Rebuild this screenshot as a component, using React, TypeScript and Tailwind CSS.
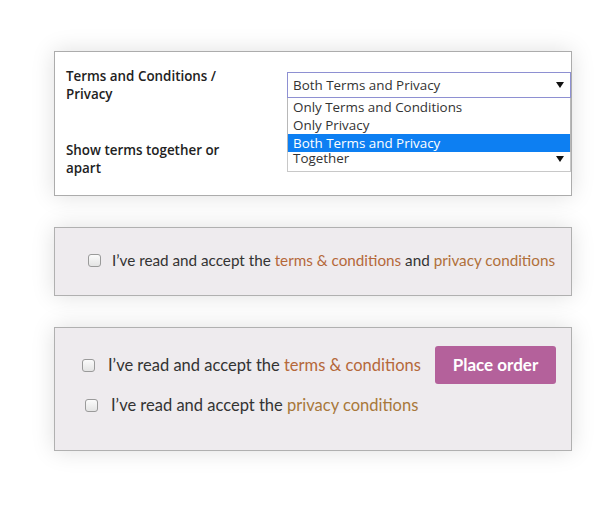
import React from "react";

const Checkbox = () => (
  <span className="inline-block w-[13px] h-[13px] shrink-0 rounded-[3px] border border-[#9a9a9a] bg-gradient-to-b from-[#fbfbfb] to-[#e4e4e4]" />
);

const Arrow = () => (
  <svg width="8" height="6" viewBox="0 0 8 6" className="shrink-0">
    <path d="M0 0 L8 0 L4 6 Z" fill="#111" />
  </svg>
);

export default function App() {
  const lato = { fontFamily: "Lato, 'Open Sans', sans-serif" } as React.CSSProperties;
  return (
    <div className="w-[600px] h-[506px] bg-white overflow-hidden" style={{ fontFamily: "'Open Sans', sans-serif" }}>
      <div className="pt-[51px] pl-[54px] flex flex-col">
        {/* Panel 1 */}
        <div className="relative w-[518px] h-[145px] border border-[#acacac] bg-white shadow-[0_0_22px_rgba(0,0,0,0.13)] pl-[11px] pt-[15px] flex flex-col gap-[38px]">
          <div className="flex items-start">
            <div className="w-[221px] text-[13.4px] leading-[18px] font-semibold text-[#222]">
              Terms and Conditions /<br />Privacy
            </div>
            <div className="relative flex-1 mt-[5px]">
              <div className="h-[26px] border border-[#8e90d2] bg-white flex items-center justify-between pl-[5px] pr-[6px] text-[13.4px] text-[#333]">
                <span>Both Terms and Privacy</span>
                <Arrow />
              </div>
              <div className="absolute left-0 right-0 top-[26px] z-10 bg-white border-x border-[#b8b8b8] text-[13.4px] text-[#333] leading-[18px]">
                <div className="h-[18px] pl-[5px]">Only Terms and Conditions</div>
                <div className="h-[18px] pl-[5px]">Only Privacy</div>
                <div className="h-[18px] pl-[5px] bg-[#0d7ff2] text-white">Both Terms and Privacy</div>
              </div>
            </div>
          </div>
          <div className="flex items-start">
            <div className="w-[221px] text-[13.4px] leading-[18px] font-semibold text-[#222]">
              Show terms together or<br />apart
            </div>
            <div className="relative flex-1 mt-[5px]">
              <div className="h-[26px] border border-[#c8c8c8] bg-white flex items-end justify-between pl-[5px] pr-[6px] pb-[3px] text-[13.4px] text-[#333]">
                <span>Together</span>
                <span className="mb-[6px]"><Arrow /></span>
              </div>
            </div>
          </div>
        </div>

        {/* Panel 2 */}
        <div className="mt-[31px] w-[518px] h-[69px] border border-[#b0b0b0] bg-[#eeebee] shadow-[0_0_22px_rgba(0,0,0,0.13)] pl-[33px] pb-[3px] flex items-center gap-[11px]" style={lato}>
          <Checkbox />
          <span className="text-[15.25px] text-[#333]">
            I’ve read and accept the <span className="text-[#b5683a]">terms &amp; conditions</span> and{" "}
            <span className="text-[#b0703a]">privacy conditions</span>
          </span>
        </div>

        {/* Panel 3 */}
        <div className="mt-[31px] w-[518px] h-[124px] border border-[#b0b0b0] bg-[#eeebee] shadow-[0_0_22px_rgba(0,0,0,0.13)] pl-[27px] pr-[15px] pt-[18px] flex items-start justify-between" style={lato}>
          <div className="flex flex-col gap-[2px]">
            <div className="h-[38px] flex items-center gap-[13px]">
              <Checkbox />
              <span className="text-[16.5px] text-[#333]">
                I’ve read and accept the <span className="text-[#b5683a]">terms &amp; conditions</span>
              </span>
            </div>
            <div className="h-[38px] flex items-center gap-[13px] ml-[3px]">
              <Checkbox />
              <span className="text-[16.5px] text-[#333]">
                I’ve read and accept the <span className="text-[#a8783a]">privacy conditions</span>
              </span>
            </div>
          </div>
          <button className="w-[121px] h-[38px] rounded-[3px] bg-[#b4619b] text-white text-[17px] font-bold" style={lato}>
            Place order
          </button>
        </div>
      </div>
    </div>
  );
}
